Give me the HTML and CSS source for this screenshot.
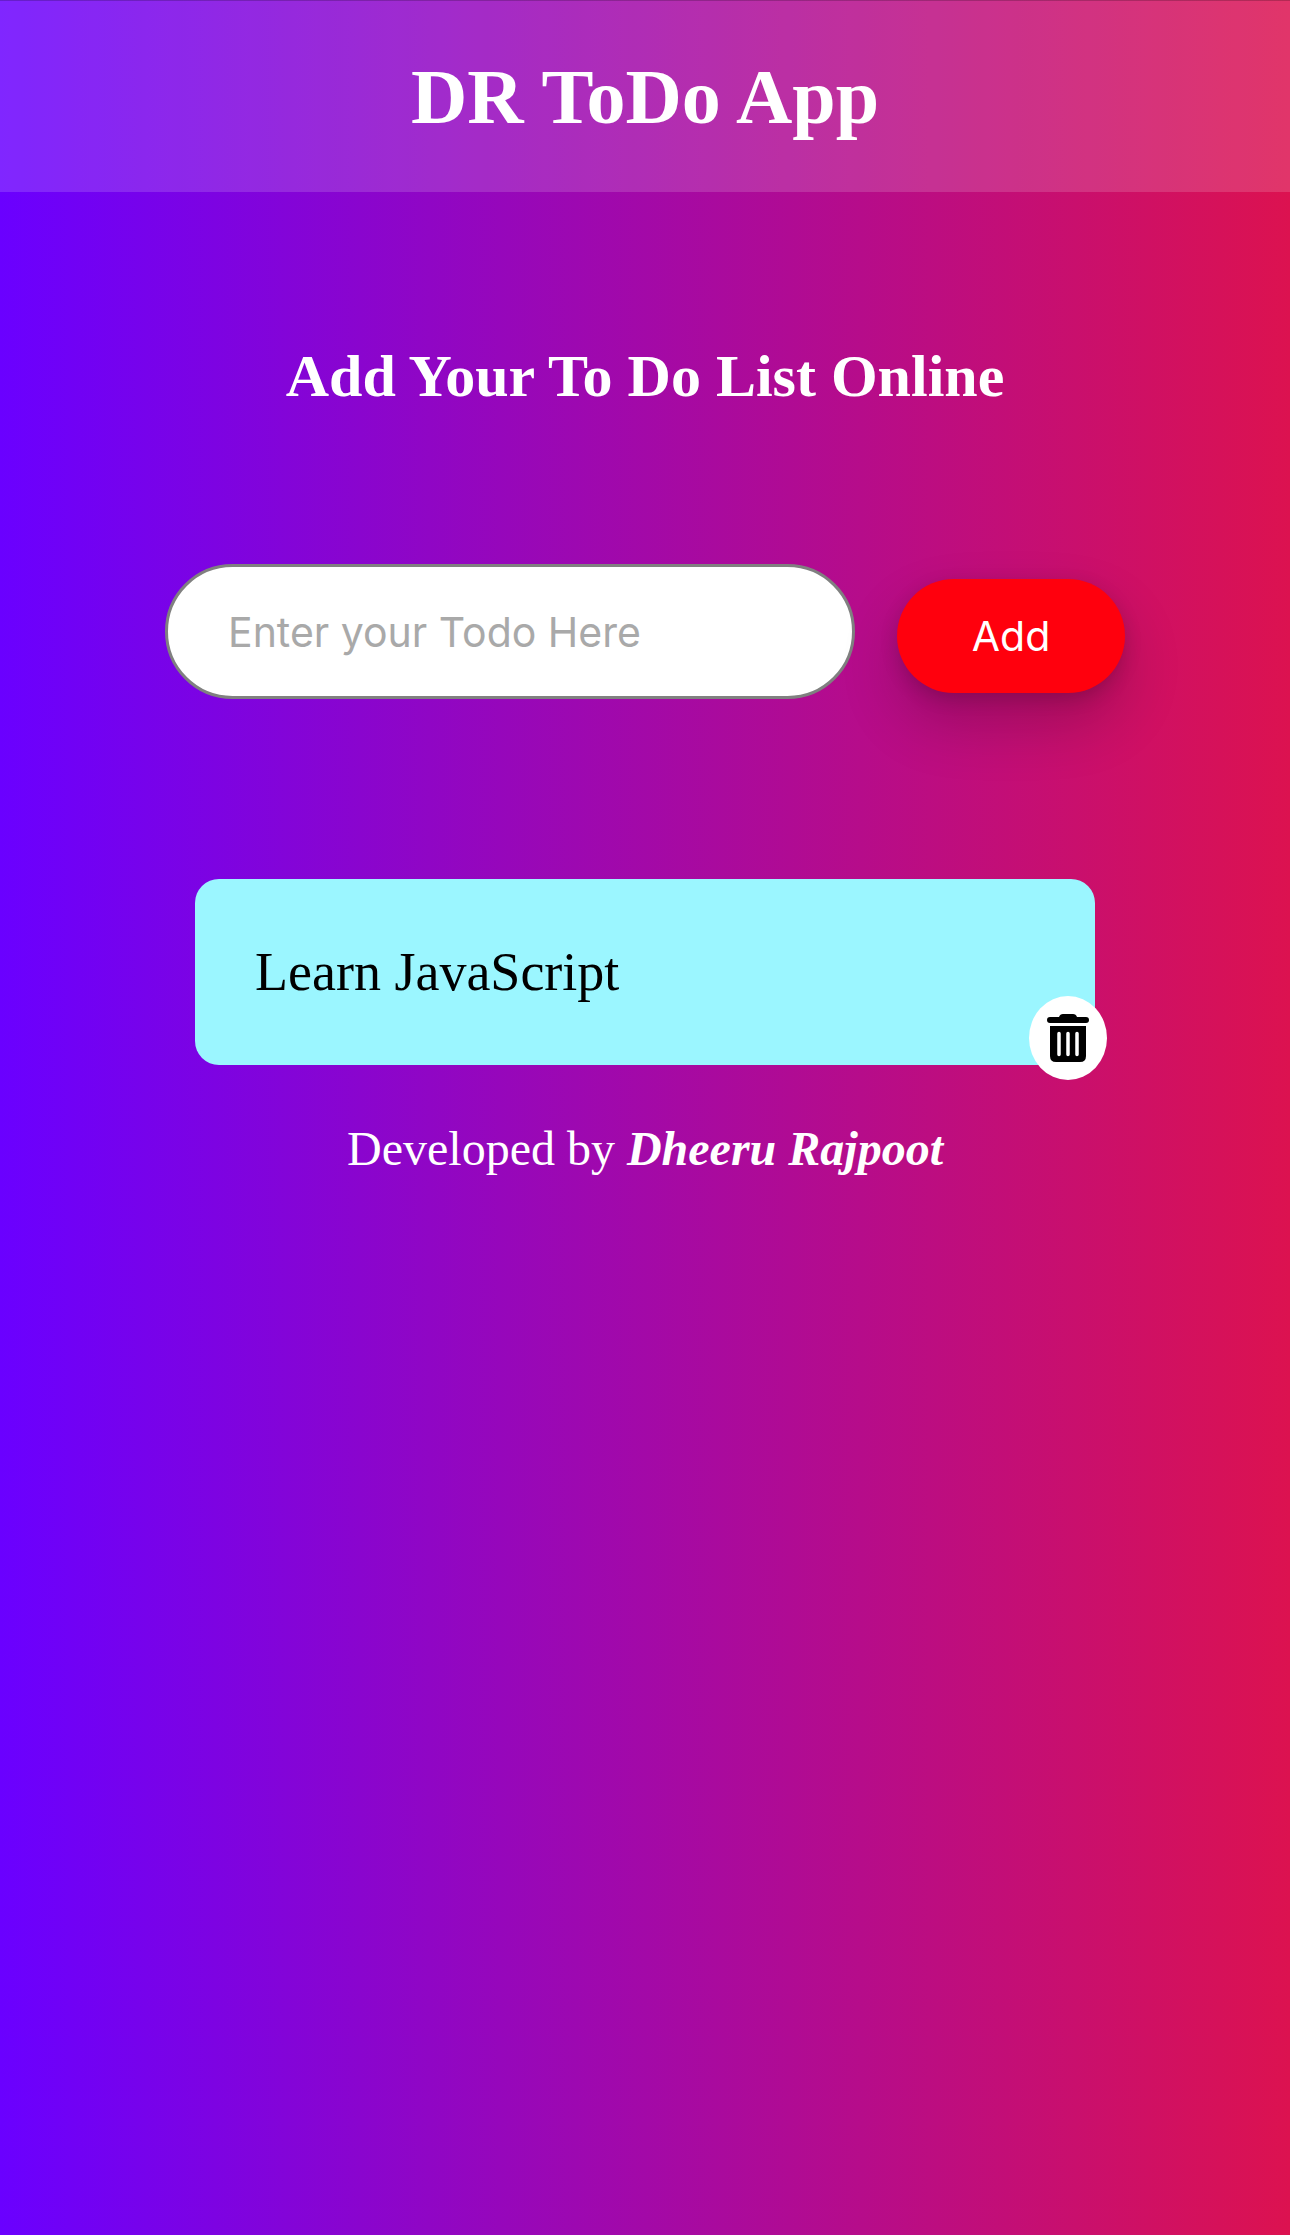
FILE: index.html
```html
<!DOCTYPE html>
<html lang="en">
<head>
<meta charset="utf-8">
<meta name="viewport" content="width=device-width, initial-scale=1">
<title>DR ToDo App</title>
<link rel="stylesheet" href="styles.css">
</head>
<body>
<header class="header"><h1 class="title">DR ToDo App</h1></header>
<main class="main">
<h2 class="subtitle">Add Your To Do List Online</h2>
<form class="form">
<input class="field" type="text" placeholder="Enter your Todo Here" aria-label="Todo">
<button class="add" type="button">Add</button>
</form>
<ul class="list">
<li class="item">
<span>Learn JavaScript</span>
<button class="delete" type="button" aria-label="Delete">
<svg class="trash" viewBox="0 0 42 48" aria-hidden="true">
<path d="M3 3H12Q13 0 16 0H26Q29 0 30 3H39A3 3 0 0 1 39 9H3A3 3 0 0 1 3 3Z"/>
<path d="M3 12H39V42Q39 48 33 48H9Q3 48 3 42Z"/>
<path d="M12 19.500V40.500M21 19.500V40.500M30 19.500V40.500" stroke="#fff" stroke-width="3.500" stroke-linecap="round"/>
</svg>
</button>
</li>
</ul>
</main>
<footer class="footer">Developed by <strong class="author">Dheeru Rajpoot</strong></footer>
</body>
</html>
```
FILE: styles.css
```css
* {
  box-sizing: border-box;
}

body {
  margin: 0;
  min-height: 100vh;
  background: linear-gradient(to right, #6a00ff, #dc1250);
  color: #fff;
  font-family: "Liberation Serif", "Times New Roman", serif;
}

.header {
  padding: 51px 24px;
  border-top: 1px solid rgba(0, 0, 0, 0.2);
  background: rgba(255, 255, 255, 0.15);
  text-align: center;
}

.title {
  margin: 0;
  font-size: 78px;
  line-height: 89px;
}

.subtitle {
  margin: 148px 0 152px;
  font-size: 60px;
  line-height: 72px;
  text-align: center;
}

.form {
  display: flex;
  justify-content: center;
  align-items: center;
  gap: 42px;
  padding: 0 165px;
}

.field {
  flex: 1;
  min-width: 0;
  height: 135px;
  padding: 0 60px;
  border: 3px solid #808080;
  border-radius: 68px;
  background: #fff;
  color: #000;
  font: 41px Inter, sans-serif;
}

.field::placeholder {
  color: #a9a9a9;
  opacity: 1;
}

.add {
  width: 228px;
  height: 114px;
  margin-top: 9px;
  padding: 0;
  border: 0;
  border-radius: 57px;
  background: #ff000d;
  box-shadow: 0 30px 60px rgba(0, 0, 0, 0.2), 0 6px 18px rgba(0, 0, 0, 0.15);
  color: #fff;
  font: 41px Inter, sans-serif;
}

.list {
  margin: 180px 195px 0;
  padding: 0;
  list-style: none;
}

.item {
  position: relative;
  padding: 60px;
  border-radius: 24px;
  background: #9bf6ff;
  color: #000;
  font-size: 54px;
  line-height: 66px;
}

.delete {
  position: absolute;
  right: -12px;
  bottom: -15px;
  display: grid;
  place-items: center;
  width: 78px;
  height: 84px;
  padding: 0;
  border: 0;
  border-radius: 50%;
  background: #fff;
}

.trash {
  width: 42px;
  height: 48px;
}

.footer {
  padding: 54px 24px;
  font-size: 48px;
  line-height: 60px;
  text-align: center;
}

.author {
  font-style: italic;
}
```
